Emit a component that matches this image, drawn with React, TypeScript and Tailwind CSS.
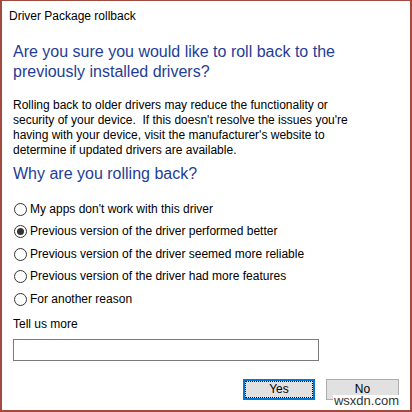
const FONT = { fontFamily: '"Liberation Sans", Arial, sans-serif' }

const REASONS = [
  { label: "My apps don't work with this driver", checked: false },
  { label: 'Previous version of the driver performed better', checked: true },
  { label: 'Previous version of the driver seemed more reliable', checked: false },
  { label: 'Previous version of the driver had more features', checked: false },
  { label: 'For another reason', checked: false },
]

function Radio({ checked }: { checked: boolean }) {
  return (
    <span className="flex h-[13px] w-[13px] shrink-0 items-center justify-center rounded-full border border-[#333333] bg-white">
      {checked && <span className="h-[7px] w-[7px] rounded-full bg-[#333333]" />}
    </span>
  )
}

export default function App() {
  return (
    <div
      style={FONT}
      className="relative flex h-[412px] w-[412px] flex-col border-x-2 border-b-2 border-t border-[#a24a3f] bg-white text-[12px] leading-[15px] text-black"
    >
      {/* 标题栏 */}
      <div className="pl-[7px] pt-[8px]">Driver Package rollback</div>

      <div className="flex flex-col px-[11px]">
        <h1 className="mt-[18px] text-[16px] leading-[20px] text-[#1f3d96]">
          Are you sure you would like to roll back to the
          <br />
          previously installed drivers?
        </h1>

        <p className="mt-[16px] whitespace-nowrap">
          Rolling back to older drivers may reduce the functionality or
          <br />
          security of your device.&nbsp; If this doesn't resolve the issues you're
          <br />
          having with your device, visit the manufacturer's website to
          <br />
          determine if updated drivers are available.
        </p>

        <h2 className="mt-[6px] text-[16px] leading-[20px] text-[#1f3d96]">Why are you rolling back?</h2>

        <ul className="mt-[14px] flex flex-col">
          {REASONS.map((r) => (
            <li key={r.label} className="flex h-[22.5px] items-center gap-[3px] pl-[1px]">
              <Radio checked={r.checked} />
              <span>{r.label}</span>
            </li>
          ))}
        </ul>

        <label className="mt-[6px]">Tell us more</label>
        <div className="mt-[7px] h-[22px] w-[306px] border border-[#7a7a7a] bg-white" />

        <div className="mt-[18px] flex justify-end gap-[11px]">
          <button className="flex h-[21px] w-[72px] items-center justify-center border-2 border-[#0078d7] bg-[#e1e1e1] p-0">
            <span className="flex h-full w-full items-center justify-center border border-dotted border-black">Yes</span>
          </button>
          <button className="flex h-[21px] w-[73px] items-center justify-center border border-[#adadad] bg-[#e1e1e1]">
            No
          </button>
        </div>
      </div>

      <span className="absolute bottom-[4px] right-[10px] bg-white px-[1px] text-[13px] leading-[11px] text-[#333333]">
        wsxdn.com
      </span>
    </div>
  )
}
